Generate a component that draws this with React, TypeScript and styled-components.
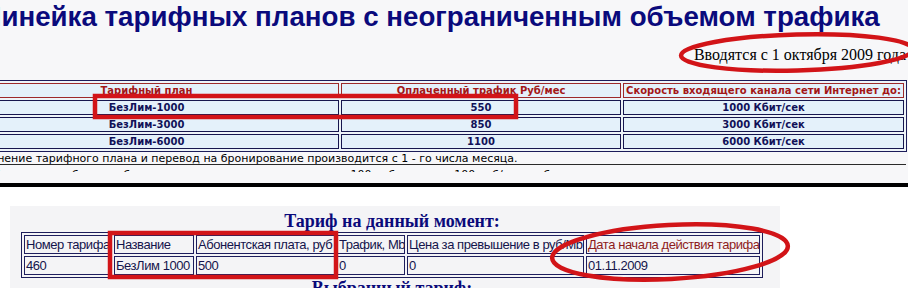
import React from "react";
import styled, { createGlobalStyle } from "styled-components";

const GlobalStyle = createGlobalStyle`
  html, body { margin: 0; padding: 0; background: #ffffff; overflow: hidden; }
  #root { width: 908px; height: 288px; }
`;

const Page = styled.div`
  position: relative;
  width: 908px;
  height: 288px;
  overflow: hidden;
  background: #ffffff;
`;

const TopSection = styled.section`
  height: 183px;
  overflow: hidden;
  background: #f7f7f9;
`;

const Title = styled.h1`
  margin: 0 0 0 -18px;
  padding-top: 1px;
  font-family: "Liberation Sans", Arial, sans-serif;
  font-weight: bold;
  font-size: 27.7px;
  line-height: 32px;
  color: #0a0a7c;
  white-space: nowrap;
`;

const DateNote = styled.div`
  margin-top: 12px;
  padding-right: 2px;
  text-align: right;
  font-family: "Liberation Serif", "Times New Roman", serif;
  font-size: 16px;
  line-height: 20px;
  color: #000;
  white-space: nowrap;
`;

const PlansTable = styled.table`
  margin: 15px 0 0 -49px;
  width: 956px;
  table-layout: fixed;
  border-collapse: separate;
  border-spacing: 2px;
  border: 1px solid #1c1c5a;
  background: #eef4f8;
`;

const PlanCell = styled.td<{ $head?: boolean }>`
  height: 13px;
  padding: 0 2px;
  border: 1px solid ${(p) => (p.$head ? "#9e2a2a" : "#16164e")};
  background: #e4f1fa;
  text-align: center;
  font-family: "DejaVu Sans", Verdana, sans-serif;
  font-weight: bold;
  font-size: 10px;
  line-height: 13px;
  color: ${(p) => (p.$head ? "#a31717" : "#111158")};
  white-space: nowrap;
  overflow: hidden;
`;

const Footnote = styled.div`
  margin: 0 0 0 -32px;
  width: 938px;
  border-bottom: 1px solid #2a2a2a;
  font-family: "DejaVu Sans", Verdana, sans-serif;
  font-size: 11px;
  line-height: 11px;
  padding-top: 1px;
  color: #000;
  white-space: nowrap;
`;

const ClippedLine = styled.div`
  margin: 3px 0 0 -32px;
  height: 4px;
  overflow: hidden;
  font-family: "DejaVu Sans", Verdana, sans-serif;
  font-size: 11px;
  line-height: 13px;
  color: #000;
  white-space: nowrap;
`;

const Divider = styled.div`
  height: 4px;
  background: #000;
`;

const BottomSection = styled.section`
  padding: 19px 0 0 10px;
  background: #ffffff;
`;

const Panel = styled.div`
  width: 770px;
  height: 90px;
  background: #f4f4f6;
  padding: 5px 0 0 11px;
  box-sizing: border-box;
`;

const PanelHeading = styled.h2`
  margin: 0;
  width: 742px;
  text-align: center;
  font-family: "Liberation Serif", "Times New Roman", serif;
  font-weight: bold;
  font-size: 18px;
  line-height: 21px;
  color: #0a0a7a;
  white-space: nowrap;
`;

const CurrentTable = styled.table`
  table-layout: fixed;
  width: 742px;
  border-collapse: separate;
  border-spacing: 2px;
  border: 1px solid #1c1c5a;
`;

const CurrentCell = styled.td<{ $accent?: boolean }>`
  height: 17px;
  padding: 0 1px;
  border: 1px solid #1e1e5e;
  text-align: left;
  font-family: "Liberation Sans", Arial, sans-serif;
  font-size: 13px;
  letter-spacing: -0.45px;
  line-height: 16px;
  color: ${(p) => (p.$accent ? "#8e1c1c" : "#14144c")};
  white-space: nowrap;
  overflow: hidden;
`;

const Overlay = styled.svg`
  position: absolute;
  left: 0;
  top: 0;
  pointer-events: none;
`;

const plans = [
  { name: "БезЛим-1000", price: "550", speed: "1000 Кбит/сек" },
  { name: "БезЛим-3000", price: "850", speed: "3000 Кбит/сек" },
  { name: "БезЛим-6000", price: "1100", speed: "6000 Кбит/сек" },
];

const currentCols = [88, 80, 139, 68, 177, 174];

const currentHead = [
  "Номер тарифа",
  "Название",
  "Абонентская плата, руб",
  "Трафик, Mb",
  "Цена за превышение в руб/Mb",
  "Дата начала действия тарифа",
];

const currentRow = ["460", "БезЛим 1000", "500", "0", "0", "01.11.2009"];

export default function App() {
  return (
    <Page>
      <GlobalStyle />
      <TopSection>
        <Title>Линейка тарифных планов с неограниченным объемом трафика</Title>
        <DateNote>Вводятся с 1 октября 2009 года</DateNote>
        <PlansTable>
          <colgroup>
            <col style={{ width: 385 }} />
            <col style={{ width: 280 }} />
            <col style={{ width: 281 }} />
          </colgroup>
          <tbody>
            <tr>
              <PlanCell $head>Тарифный план</PlanCell>
              <PlanCell $head>Оплаченный трафик Руб/мес</PlanCell>
              <PlanCell $head>Скорость входящего канала сети Интернет до:</PlanCell>
            </tr>
            {plans.map((p) => (
              <tr key={p.name}>
                <PlanCell>{p.name}</PlanCell>
                <PlanCell>{p.price}</PlanCell>
                <PlanCell>{p.speed}</PlanCell>
              </tr>
            ))}
          </tbody>
        </PlansTable>
        <Footnote>
          Изменение тарифного плана и перевод на бронирование производится с 1 - го числа месяца.
        </Footnote>
        <ClippedLine>
          При блокировке абонента бронирование линии взимается плата 100 руб. в месяц, 100 руб/мес за блок
        </ClippedLine>
      </TopSection>
      <Divider />
      <BottomSection>
        <Panel>
          <PanelHeading>Тариф на данный момент:</PanelHeading>
          <CurrentTable>
            <colgroup>
              {currentCols.map((w, i) => (
                <col key={i} style={{ width: w }} />
              ))}
            </colgroup>
            <tbody>
              <tr>
                {currentHead.map((h, i) => (
                  <CurrentCell key={h} $accent={i === 5}>
                    {h}
                  </CurrentCell>
                ))}
              </tr>
              <tr>
                {currentRow.map((v, i) => (
                  <CurrentCell key={i}>{v}</CurrentCell>
                ))}
              </tr>
            </tbody>
          </CurrentTable>
          <PanelHeading>Выбранный тариф:</PanelHeading>
        </Panel>
      </BottomSection>
      <Overlay width="908" height="288" viewBox="0 0 908 288">
        <g fill="none" stroke="#d21418" strokeWidth="4.5">
          <ellipse cx="797" cy="52.5" rx="116" ry="18" transform="rotate(-1.5 797 52.5)" />
          <rect x="95" y="96" width="421" height="21" />
          <rect x="110" y="233" width="226" height="44" />
          <ellipse cx="670" cy="252" rx="118" ry="27" transform="rotate(-3 670 252)" />
        </g>
      </Overlay>
    </Page>
  );
}
